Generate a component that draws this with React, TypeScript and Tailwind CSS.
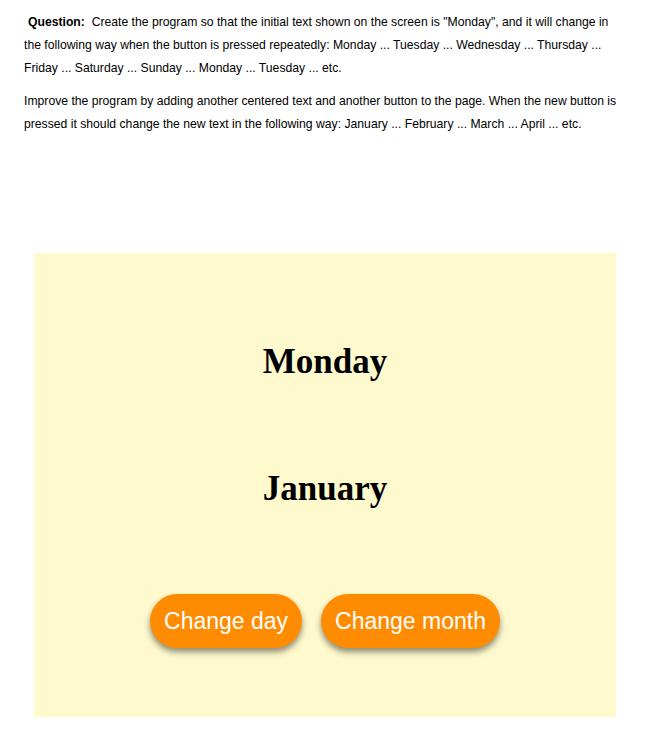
import { useState } from 'react';

const days = ['Monday', 'Tuesday', 'Wednesday', 'Thursday', 'Friday', 'Saturday', 'Sunday'];
const months = [
  'January', 'February', 'March', 'April', 'May', 'June',
  'July', 'August', 'September', 'October', 'November', 'December',
];

export default function App() {
  const [day, setDay] = useState(0);
  const [month, setMonth] = useState(0);

  return (
    <div className="w-[656px] h-[752px] bg-white font-['Liberation_Sans',Arial,sans-serif] text-black">
      <div className="pt-[11px] pl-[24px] text-[12.2px] leading-[23px] whitespace-nowrap">
        <p>
          <b className="ml-[4px]">Question:</b>&nbsp; Create the program so that the initial text shown on the screen is
          "Monday", and it will change in
          <br />
          the following way when the button is pressed repeatedly: Monday ... Tuesday ... Wednesday ... Thursday ...
          <br />
          Friday ... Saturday ... Sunday ... Monday ... Tuesday ... etc.
        </p>
        <p className="mt-[10px]">
          Improve the program by adding another centered text and another button to the page. When the new button is
          <br />
          pressed it should change the new text in the following way: January ... February ... March ... April ... etc.
        </p>
      </div>

      <div className="mt-[117px] ml-[34px] w-[582px] h-[464px] bg-[#fffacd] flex flex-col items-center">
        <h1 className="mt-[89px] h-[40px] leading-[40px] text-[35px] font-bold font-['Liberation_Serif','Times_New_Roman',serif]">
          {days[day]}
        </h1>
        <h1 className="mt-[87px] h-[40px] leading-[40px] text-[35px] font-bold font-['Liberation_Serif','Times_New_Roman',serif]">
          {months[month]}
        </h1>
        <div className="mt-[85px] flex gap-[19px]">
          <button
            onClick={() => setDay((day + 1) % days.length)}
            className="h-[54px] px-[14px] rounded-full bg-[#ff8c00] text-white text-[23px] shadow-[0_4px_6px_rgba(0,0,0,0.45)]"
          >
            Change day
          </button>
          <button
            onClick={() => setMonth((month + 1) % months.length)}
            className="h-[54px] px-[14px] rounded-full bg-[#ff8c00] text-white text-[23px] shadow-[0_4px_6px_rgba(0,0,0,0.45)]"
          >
            Change month
          </button>
        </div>
      </div>
    </div>
  );
}
